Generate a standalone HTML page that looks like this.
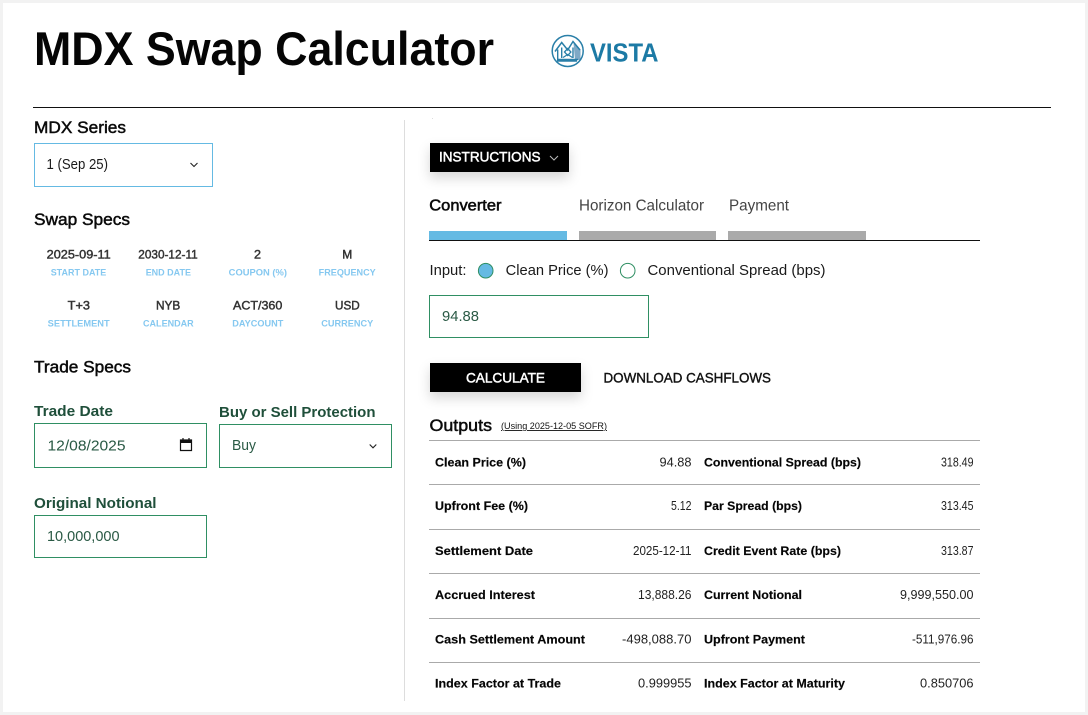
<!DOCTYPE html>
<html lang="en">
<head>
<meta charset="utf-8">
<title>MDX Swap Calculator</title>
<style>
html,body{margin:0;padding:0;background:#f2f2f2;width:1088px;height:715px;overflow:hidden}
svg{display:block}
text{font-family:"Liberation Sans",sans-serif;}
.h{font-size:17px;fill:#0a0a0a;stroke:#0a0a0a;stroke-width:.5px}
.v{font-size:12px;fill:#333;stroke:#333;stroke-width:.45px}
.l{font-size:9px;font-weight:700;fill:#85c8f0}
.g{font-size:14.5px;font-weight:700;fill:#1f4f3a}
.i{font-size:15px;fill:#2a5a45}
.b{font-size:14.5px;fill:#1a1a1a}
.w{font-size:14px;fill:#fff;stroke:#fff;stroke-width:.5px}
.t{font-size:16px;fill:#444}
.k{font-size:12px;font-weight:700;fill:#050505;stroke:#050505;stroke-width:.15px}
.n{font-size:12.500px;fill:#222}
</style>
</head>
<body>
<svg width="1088" height="715" viewBox="0 0 1088 715" xmlns="http://www.w3.org/2000/svg">
<defs>
<filter id="s" x="-20%" y="-50%" width="140%" height="250%"><feDropShadow dx="0" dy="6" stdDeviation="6" flood-color="#000" flood-opacity=".16"/></filter>
</defs>
<rect x="3" y="3" width="1082" height="709" fill="#fff"/>

<text x="34" y="65" font-size="47" font-weight="700" fill="#050505" textLength="460" lengthAdjust="spacingAndGlyphs">MDX Swap Calculator</text>

<path d="M573.300 41L580.500 49.500V60H575z" fill="#7fa9c6"/>
<g fill="none" stroke="#2a7fa8">
<circle cx="567.700" cy="51" r="15.500" stroke-width="1.500"/>
<path d="M555 51.500l6.700-9 6 7.500 5.300-8.500 7 8.500" stroke-width="1.500"/>
<path d="M557.700 49.500V61H577M561.700 47.500V58M573 47.500V58M557.700 59.500H578" stroke-width="1.400"/>
<path d="M564.500 52l3.200-3.500 3.200 3.500-3.200 3.500z" stroke-width="1.300"/>
<path d="M563 57.500l4.700-3 4.700 3" stroke-width="1.200"/>
</g>
<text x="590" y="61.300" font-size="25.500" font-weight="700" fill="#1c7aa5" textLength="68.500" lengthAdjust="spacingAndGlyphs">VISTA</text>

<rect x="33" y="107" width="1018" height="1" fill="#111"/>
<rect x="404" y="120" width="1" height="581" fill="#ddd"/>

<text class="h" x="34" y="133" textLength="92" lengthAdjust="spacingAndGlyphs">MDX Series</text>
<rect x="34.500" y="143.500" width="178" height="43" fill="#fff" stroke="#65bae3"/>
<text class="b" x="46.500" y="169" textLength="61.500" lengthAdjust="spacingAndGlyphs">1 (Sep 25)</text>
<path d="M190.500 163l3.500 3.500 3.500-3.500" fill="none" stroke="#222" stroke-width="1.100"/>

<text class="h" x="34" y="225" textLength="96" lengthAdjust="spacingAndGlyphs">Swap Specs</text>

<text class="v" x="46.700" y="258.300" textLength="64" lengthAdjust="spacingAndGlyphs">2025-09-11</text>
<text class="v" x="138.300" y="258.300" textLength="59.400" lengthAdjust="spacingAndGlyphs">2030-12-11</text>
<text class="v" x="254" y="258.300" textLength="7" lengthAdjust="spacingAndGlyphs">2</text>
<text class="v" x="342.300" y="258.300" textLength="10" lengthAdjust="spacingAndGlyphs">M</text>
<text class="l" x="50.700" y="275.700" textLength="55.600" lengthAdjust="spacingAndGlyphs">START DATE</text>
<text class="l" x="145.700" y="275.700" textLength="45.300" lengthAdjust="spacingAndGlyphs">END DATE</text>
<text class="l" x="228.700" y="275.700" textLength="58.300" lengthAdjust="spacingAndGlyphs">COUPON (%)</text>
<text class="l" x="318.700" y="275.700" textLength="57" lengthAdjust="spacingAndGlyphs">FREQUENCY</text>

<text class="v" x="67.700" y="309.300" textLength="22.300" lengthAdjust="spacingAndGlyphs">T+3</text>
<text class="v" x="156" y="309.300" textLength="24.300" lengthAdjust="spacingAndGlyphs">NYB</text>
<text class="v" x="233" y="309.300" textLength="49.300" lengthAdjust="spacingAndGlyphs">ACT/360</text>
<text class="v" x="335" y="309.300" textLength="24.700" lengthAdjust="spacingAndGlyphs">USD</text>
<text class="l" x="47.700" y="326.700" textLength="62" lengthAdjust="spacingAndGlyphs">SETTLEMENT</text>
<text class="l" x="143" y="326.700" textLength="50.700" lengthAdjust="spacingAndGlyphs">CALENDAR</text>
<text class="l" x="232.300" y="326.700" textLength="51" lengthAdjust="spacingAndGlyphs">DAYCOUNT</text>
<text class="l" x="321.300" y="326.700" textLength="52" lengthAdjust="spacingAndGlyphs">CURRENCY</text>

<text class="h" x="34" y="372.700" textLength="97" lengthAdjust="spacingAndGlyphs">Trade Specs</text>

<text class="g" x="34" y="416" textLength="79" lengthAdjust="spacingAndGlyphs">Trade Date</text>
<text class="g" x="219" y="417" textLength="156.500" lengthAdjust="spacingAndGlyphs">Buy or Sell Protection</text>
<rect x="34.500" y="423.500" width="172" height="44" fill="#fff" stroke="#2f8f63"/>
<text class="i" x="47.500" y="450.300" textLength="78" lengthAdjust="spacingAndGlyphs">12/08/2025</text>
<path d="M180.500 440h11v10.500h-11zM183 438v2M189 438v2" fill="none" stroke="#111" stroke-width="1.200"/>
<rect x="181" y="440.500" width="10" height="2.500" fill="#111"/>
<rect x="219.500" y="424.500" width="172" height="43" fill="#fff" stroke="#2f8f63"/>
<text class="i" x="232" y="450" textLength="24" lengthAdjust="spacingAndGlyphs">Buy</text>
<path d="M369.700 444.500l3.300 3.300 3.300-3.300" fill="none" stroke="#222" stroke-width="1.100"/>

<text class="g" x="34" y="508" textLength="122.500" lengthAdjust="spacingAndGlyphs">Original Notional</text>
<rect x="34.500" y="515.500" width="172" height="42" fill="#fff" stroke="#2f8f63"/>
<text class="i" x="47" y="541" textLength="72.500" lengthAdjust="spacingAndGlyphs">10,000,000</text>

<rect x="432" y="118" width="1" height="1" fill="#ddd"/>
<rect x="430" y="143" width="139" height="29" fill="#000" filter="url(#s)"/>
<text class="w" x="439" y="161.700" textLength="101.500" lengthAdjust="spacingAndGlyphs">INSTRUCTIONS</text>
<path d="M550 156l4 4 4-4" fill="none" stroke="#bbb" stroke-width="1"/>

<text x="429.300" y="210.700" font-size="15.500" fill="#0a0a0a" stroke="#0a0a0a" stroke-width=".55" textLength="72.200" lengthAdjust="spacingAndGlyphs">Converter</text>
<text class="t" x="579" y="210.700" textLength="125" lengthAdjust="spacingAndGlyphs">Horizon Calculator</text>
<text class="t" x="729" y="210.700" textLength="60" lengthAdjust="spacingAndGlyphs">Payment</text>
<rect x="429" y="231" width="138" height="9" fill="#65bae3"/>
<rect x="579" y="231" width="137" height="9" fill="#aaa"/>
<rect x="728" y="231" width="138" height="9" fill="#aaa"/>
<rect x="429" y="240" width="551" height="1" fill="#111"/>

<text class="b" x="429.500" y="275" textLength="37" lengthAdjust="spacingAndGlyphs">Input:</text>
<circle cx="485.700" cy="270.700" r="7.300" fill="#65bae3" stroke="#2f8f63"/>
<text class="b" x="505.700" y="275" textLength="102.800" lengthAdjust="spacingAndGlyphs">Clean Price (%)</text>
<circle cx="627.700" cy="270.700" r="7.300" fill="#fff" stroke="#2f8f63"/>
<text class="b" x="647.500" y="275" textLength="178" lengthAdjust="spacingAndGlyphs">Conventional Spread (bps)</text>

<rect x="429.500" y="295.500" width="219" height="42" fill="#fff" stroke="#2f8f63"/>
<text class="i" x="442" y="321" textLength="37" lengthAdjust="spacingAndGlyphs">94.88</text>

<rect x="430" y="363" width="151" height="29" fill="#000" filter="url(#s)"/>
<text class="w" x="466" y="382.300" textLength="79" lengthAdjust="spacingAndGlyphs">CALCULATE</text>
<text x="603.500" y="382.300" font-size="14" fill="#111" stroke="#111" stroke-width=".4" textLength="167.500" lengthAdjust="spacingAndGlyphs">DOWNLOAD CASHFLOWS</text>

<text class="h" x="429.500" y="431" textLength="62.500" lengthAdjust="spacingAndGlyphs">Outputs</text>
<text x="501" y="429" font-size="9" fill="#111" text-decoration="underline" textLength="106" lengthAdjust="spacingAndGlyphs">(Using 2025-12-05 SOFR)</text>

<g fill="#aaa">
<rect x="429" y="440" width="551" height="1"/>
<rect x="429" y="484" width="551" height="1"/>
<rect x="429" y="529" width="551" height="1"/>
<rect x="429" y="573" width="551" height="1"/>
<rect x="429" y="618" width="551" height="1"/>
<rect x="429" y="662" width="551" height="1"/>
</g>

<text class="k" x="435" y="466.300" textLength="91" lengthAdjust="spacingAndGlyphs">Clean Price (%)</text>
<text class="n" x="659.500" y="466.300" textLength="32" lengthAdjust="spacingAndGlyphs">94.88</text>
<text class="k" x="704" y="466.300" textLength="157" lengthAdjust="spacingAndGlyphs">Conventional Spread (bps)</text>
<text class="n" x="941" y="466.300" textLength="32.500" lengthAdjust="spacingAndGlyphs">318.49</text>

<text class="k" x="435" y="510" textLength="93" lengthAdjust="spacingAndGlyphs">Upfront Fee (%)</text>
<text class="n" x="671" y="510" textLength="20.500" lengthAdjust="spacingAndGlyphs">5.12</text>
<text class="k" x="704" y="510" textLength="98" lengthAdjust="spacingAndGlyphs">Par Spread (bps)</text>
<text class="n" x="941" y="510" textLength="32.500" lengthAdjust="spacingAndGlyphs">313.45</text>

<text class="k" x="435" y="555" textLength="98" lengthAdjust="spacingAndGlyphs">Settlement Date</text>
<text class="n" x="633" y="555" textLength="58.500" lengthAdjust="spacingAndGlyphs">2025-12-11</text>
<text class="k" x="704" y="555" textLength="137" lengthAdjust="spacingAndGlyphs">Credit Event Rate (bps)</text>
<text class="n" x="941" y="555" textLength="32.500" lengthAdjust="spacingAndGlyphs">313.87</text>

<text class="k" x="435" y="599" textLength="100" lengthAdjust="spacingAndGlyphs">Accrued Interest</text>
<text class="n" x="638" y="599" textLength="53.500" lengthAdjust="spacingAndGlyphs">13,888.26</text>
<text class="k" x="704" y="599" textLength="98" lengthAdjust="spacingAndGlyphs">Current Notional</text>
<text class="n" x="900" y="599" textLength="73.500" lengthAdjust="spacingAndGlyphs">9,999,550.00</text>

<text class="k" x="435" y="643.700" textLength="150" lengthAdjust="spacingAndGlyphs">Cash Settlement Amount</text>
<text class="n" x="622" y="643.700" textLength="69.500" lengthAdjust="spacingAndGlyphs">-498,088.70</text>
<text class="k" x="704" y="643.700" textLength="101" lengthAdjust="spacingAndGlyphs">Upfront Payment</text>
<text class="n" x="912" y="643.700" textLength="61.500" lengthAdjust="spacingAndGlyphs">-511,976.96</text>

<text class="k" x="435" y="687.700" textLength="126" lengthAdjust="spacingAndGlyphs">Index Factor at Trade</text>
<text class="n" x="638" y="687.700" textLength="53.500" lengthAdjust="spacingAndGlyphs">0.999955</text>
<text class="k" x="704" y="687.700" textLength="141" lengthAdjust="spacingAndGlyphs">Index Factor at Maturity</text>
<text class="n" x="920" y="687.700" textLength="53.500" lengthAdjust="spacingAndGlyphs">0.850706</text>
</svg>
</body>
</html>
